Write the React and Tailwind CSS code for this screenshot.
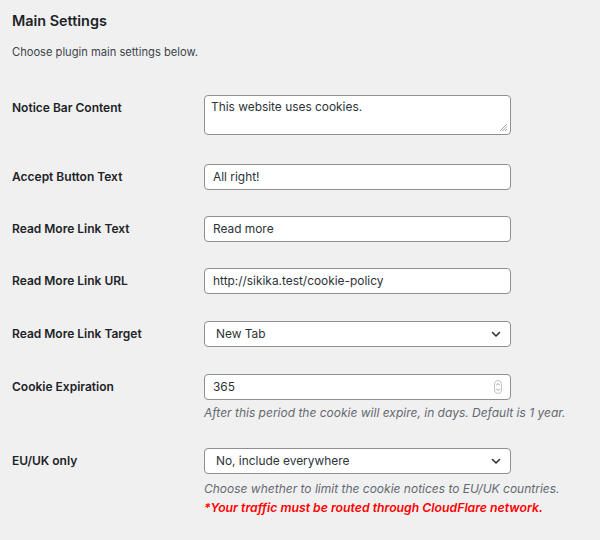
function Chevron() {
  return (
    <svg width="12" height="12" viewBox="0 0 12 12" className="text-[#2c3338]">
      <path d="M2.5 4.5 L6 8 L9.5 4.5" fill="none" stroke="currentColor" strokeWidth="1.6" strokeLinecap="round" strokeLinejoin="round" />
    </svg>
  )
}

function Spinner() {
  return (
    <svg width="8" height="14" viewBox="0 0 8 14">
      <rect x="0.5" y="0.5" width="7" height="13" rx="3.5" fill="none" stroke="#c3c4c7" />
      <path d="M2.3 5.2 L4 3.5 L5.7 5.2 M2.3 8.8 L4 10.5 L5.7 8.8" fill="none" stroke="#8c8f94" strokeWidth="0.9" />
    </svg>
  )
}

function Row({ label, children, className = '' }) {
  return (
    <div className={`flex ${className}`}>
      <div className="w-[192px] shrink-0 pt-[5px] text-[12px] font-semibold leading-[16px] text-[#1d2327]">{label}</div>
      <div className="w-[307px]">{children}</div>
    </div>
  )
}

function Field({ children, right }) {
  return (
    <div className="flex h-[26px] items-center justify-between rounded-[4px] border border-[#8c8f94] bg-white pl-[8px] pr-[8px] text-[11.9px] text-[#2c3338]">
      <span>{children}</span>
      {right}
    </div>
  )
}

function Select({ children }) {
  return (
    <div className="flex h-[26px] items-center justify-between rounded-[4px] border border-[#8c8f94] bg-white pl-[11px] pr-[8px] text-[11.9px] text-[#2c3338]">
      <span>{children}</span>
      <Chevron />
    </div>
  )
}

export default function App() {
  return (
    <div className="w-[600px] h-[540px] overflow-hidden bg-[#f0f0f1] px-3 font-['Inter','Liberation_Sans',Arial,sans-serif]">
      <h2 className="pt-[11px] text-[14.4px] font-semibold leading-[20px] text-[#1d2327]">Main Settings</h2>
      <p className="mt-[13px] text-[11.15px] leading-[16px] text-[#3c434a]">Choose plugin main settings below.</p>

      <Row label="Notice Bar Content" className="mt-[35px]">
        <div className="relative h-[40px] rounded-[4px] border border-[#8c8f94] bg-white px-[6px] pt-[3px] text-[11.9px] leading-[16px] text-[#2c3338]">
          This website uses cookies.
          <svg width="9" height="9" viewBox="0 0 9 9" className="absolute bottom-[2px] right-[2px]">
            <path d="M8 1 L1 8 M8 3.5 L3.5 8 M8 6 L6 8" stroke="#8c8f94" strokeWidth="0.8" />
          </svg>
        </div>
      </Row>

      <Row label="Accept Button Text" className="mt-[29px]">
        <Field>All right!</Field>
      </Row>

      <Row label="Read More Link Text" className="mt-[26px]">
        <Field>Read more</Field>
      </Row>

      <Row label="Read More Link URL" className="mt-[26px]">
        <Field>http://sikika.test/cookie-policy</Field>
      </Row>

      <Row label="Read More Link Target" className="mt-[27px]">
        <Select>New Tab</Select>
      </Row>

      <Row label="Cookie Expiration" className="mt-[27px]">
        <Field right={<Spinner />}>365</Field>
        <p className="mt-[5px] text-[12px] italic leading-[16px] text-[#646970] whitespace-nowrap">
          After this period the cookie will expire, in days. Default is 1 year.
        </p>
      </Row>

      <Row label="EU/UK only" className="mt-[27px]">
        <Select>No, include everywhere</Select>
        <p className="mt-[5px] text-[12px] italic leading-[19px] text-[#646970] whitespace-nowrap">
          Choose whether to limit the cookie notices to EU/UK countries.
        </p>
        <p className="text-[12.25px] italic font-semibold leading-[19px] text-[#ff0000] whitespace-nowrap">
          *Your traffic must be routed through CloudFlare network.
        </p>
      </Row>
    </div>
  )
}
